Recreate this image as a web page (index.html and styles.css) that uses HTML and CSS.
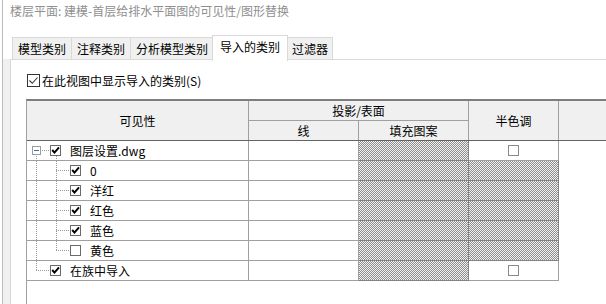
FILE: index.html
```html
<!DOCTYPE html>
<html lang="zh-CN">
<head>
    <meta charset="UTF-8">
    <title>可见性/图形替换</title>
    <link rel="stylesheet" href="styles.css">
</head>
<body>
    <div class="window">
        <div class="title">楼层平面: 建模-首层给排水平面图的可见性/图形替换</div>

        <div class="tabs">
            <div class="tab">模型类别</div>
            <div class="tab">注释类别</div>
            <div class="tab">分析模型类别</div>
            <div class="tab active">导入的类别</div>
            <div class="tab last">过滤器</div>
        </div>

        <div class="panel">
            <div class="show-row">
                <span class="big-box">
                    <svg width="11" height="11" viewBox="0 0 11 11"><path d="M1.5 5.5 L4.3 8.3 L9.5 2.5" fill="none" stroke="#333" stroke-width="1.1"/></svg>
                </span>
                <span>在此视图中显示导入的类别(S)</span>
            </div>

            <div class="table">
                <div class="head">
                    <div class="h vis">可见性</div>
                    <div class="h proj">投影/表面</div>
                    <div class="h half">半色调</div>
                    <div class="h rest"></div>
                    <div class="h sub">线</div>
                    <div class="h sub">填充图案</div>
                </div>

                <div class="rows">
                    <!-- 图层设置.dwg -->
                    <div class="c name parent">
                        <span class="ind exp"><span class="minus"></span></span>
                        <span class="chk"><svg width="9" height="9" viewBox="0 0 9 9"><path d="M1.2 4 L3.5 6.6 L8 1.4" fill="none" stroke="#000" stroke-width="2"/></svg></span>
                        <span>图层设置.dwg</span>
                    </div>
                    <div class="c"></div>
                    <div class="c hatch"></div>
                    <div class="c mid"><span class="chk off"></span></div>

                    <div class="c name">
                        <span class="ind pipe"></span><span class="ind tee"></span>
                        <span class="chk"><svg width="9" height="9" viewBox="0 0 9 9"><path d="M1.2 4 L3.5 6.6 L8 1.4" fill="none" stroke="#000" stroke-width="2"/></svg></span>
                        <span>0</span>
                    </div>
                    <div class="c"></div>
                    <div class="c hatch"></div>
                    <div class="c hatch"></div>

                    <div class="c name">
                        <span class="ind pipe"></span><span class="ind tee"></span>
                        <span class="chk"><svg width="9" height="9" viewBox="0 0 9 9"><path d="M1.2 4 L3.5 6.6 L8 1.4" fill="none" stroke="#000" stroke-width="2"/></svg></span>
                        <span>洋红</span>
                    </div>
                    <div class="c"></div>
                    <div class="c hatch"></div>
                    <div class="c hatch"></div>

                    <div class="c name">
                        <span class="ind pipe"></span><span class="ind tee"></span>
                        <span class="chk"><svg width="9" height="9" viewBox="0 0 9 9"><path d="M1.2 4 L3.5 6.6 L8 1.4" fill="none" stroke="#000" stroke-width="2"/></svg></span>
                        <span>红色</span>
                    </div>
                    <div class="c"></div>
                    <div class="c hatch"></div>
                    <div class="c hatch"></div>

                    <div class="c name">
                        <span class="ind pipe"></span><span class="ind tee"></span>
                        <span class="chk"><svg width="9" height="9" viewBox="0 0 9 9"><path d="M1.2 4 L3.5 6.6 L8 1.4" fill="none" stroke="#000" stroke-width="2"/></svg></span>
                        <span>蓝色</span>
                    </div>
                    <div class="c"></div>
                    <div class="c hatch"></div>
                    <div class="c hatch"></div>

                    <div class="c name">
                        <span class="ind pipe"></span><span class="ind elbow"></span>
                        <span class="chk"></span>
                        <span>黄色</span>
                    </div>
                    <div class="c"></div>
                    <div class="c hatch"></div>
                    <div class="c hatch"></div>

                    <!-- 在族中导入 -->
                    <div class="c name">
                        <span class="ind elbow"></span>
                        <span class="chk"><svg width="9" height="9" viewBox="0 0 9 9"><path d="M1.2 4 L3.5 6.6 L8 1.4" fill="none" stroke="#000" stroke-width="2"/></svg></span>
                        <span>在族中导入</span>
                    </div>
                    <div class="c"></div>
                    <div class="c hatch"></div>
                    <div class="c mid"><span class="chk off"></span></div>
                </div>
            </div>
        </div>
    </div>
</body>
</html>
```

FILE: styles.css
```css
html, body {
    margin: 0;
    height: 100%;
    overflow: hidden;
}

body {
    font-family: "Noto Sans CJK SC", "Noto Sans", sans-serif;
    font-size: 12px;
    color: #000;
    background-color: #fff;
}

.window {
    height: 100vh;
    margin-left: 2px;
    border-left: 1px solid #bcbcbc;
    display: flex;
    flex-direction: column;
    background: linear-gradient(#f0f0f0, #f0f0f0) 0 59px / 7px 100% no-repeat #fff;
}

.title {
    height: 35px;
    line-height: 22px;
    padding-left: 7px;
    color: #8f8f8f;
    white-space: nowrap;
    box-sizing: border-box;
}

/* tabs */
.tabs {
    display: flex;
    align-items: flex-end;
    height: 24px;
    margin-left: 7px;
    padding-left: 2px;
}

.tab {
    height: 22px;
    line-height: 21px;
    padding: 0 5px;
    box-sizing: border-box;
    border: 1px solid #d9d9d9;
    border-bottom: none;
    margin-right: -1px;
    background-color: #f0f0f0;
    white-space: nowrap;
}

.tab.active {
    height: 26px;
    margin-bottom: -2px;
    margin-left: -1px;
    padding: 0 7px 4px;
    background-color: #fff;
    position: relative;
    z-index: 1;
}

.tab.last {
    padding: 0 4px;
}

/* panel */
.panel {
    flex: 1;
    margin-left: 7px;
    border-top: 1px solid #d9d9d9;
    border-left: 1px solid #d9d9d9;
    background-color: #fff;
    display: flex;
    flex-direction: column;
    min-height: 0;
}

.show-row {
    display: flex;
    align-items: center;
    height: 13px;
    margin: 14px 0 0 16px;
    line-height: 13px;
    white-space: nowrap;
}

.big-box {
    width: 13px;
    height: 13px;
    box-sizing: border-box;
    border: 1px solid #333;
    margin-right: 2px;
    display: flex;
    align-items: center;
    justify-content: center;
}

/* table */
.table {
    flex: 1;
    margin: 12px 0 0 15px;
    border-top: 2px solid #7d7d7d;
    border-left: 1px solid #a0a0a0;
}

.head {
    display: grid;
    grid-template-columns: 222px 110px 110px 90px 1fr;
    grid-template-rows: 20px 19px;
    background-color: #f0f0f0;
    border-bottom: 1px solid #646464;
}

.h {
    display: flex;
    align-items: center;
    justify-content: center;
    box-sizing: border-box;
    border-right: 1px solid #a0a0a0;
    white-space: nowrap;
}

.vis {
    grid-row: 1 / 3;
}

.proj {
    grid-column: 2 / 4;
    border-bottom: 1px solid #a0a0a0;
}

.half {
    grid-column: 4;
    grid-row: 1 / 3;
}

.rest {
    grid-column: 5;
    grid-row: 1 / 3;
    border-right: none;
}

.rows {
    display: grid;
    grid-template-columns: 222px 110px 110px 90px;
    grid-auto-rows: 20px;
    width: 532px;
}

.c {
    box-sizing: border-box;
    border-right: 1px solid #a0a0a0;
    border-bottom: 1px solid #a0a0a0;
}

.c.mid {
    display: flex;
    align-items: center;
    justify-content: center;
}

.c.hatch {
    background: repeating-conic-gradient(#8e8e8e 0 25%, #f2f2f2 0 50%) 0 0 / 2px 2px;
    border-right-style: dotted;
    border-bottom-style: dotted;
    border-color: #7a7a7a;
}

/* tree column */
.c.name {
    display: flex;
    align-items: stretch;
    white-space: nowrap;
}

.c.name > span:last-child {
    align-self: center;
    line-height: 14px;
}

.c.parent {
    background: repeating-linear-gradient(#9a9a9a 0 1px, transparent 1px 2px) 29px 15px / 1px 5px no-repeat;
}

.ind {
    width: 20px;
    flex: none;
}

.pipe {
    background: repeating-linear-gradient(#9a9a9a 0 1px, transparent 1px 2px) 9px 0 / 1px 100% no-repeat;
}

.tee, .elbow, .exp {
    width: 23px;
}

.tee {
    background:
        repeating-linear-gradient(#9a9a9a 0 1px, transparent 1px 2px) 9px 0 / 1px 100% no-repeat,
        repeating-linear-gradient(to right, #9a9a9a 0 1px, transparent 1px 2px) 9px 9px / 13px 1px no-repeat;
}

.elbow {
    background:
        repeating-linear-gradient(#9a9a9a 0 1px, transparent 1px 2px) 9px 0 / 1px 10px no-repeat,
        repeating-linear-gradient(to right, #9a9a9a 0 1px, transparent 1px 2px) 9px 9px / 13px 1px no-repeat;
}

.exp {
    display: flex;
    align-items: center;
    background:
        repeating-linear-gradient(#9a9a9a 0 1px, transparent 1px 2px) 9px 15px / 1px 5px no-repeat,
        repeating-linear-gradient(to right, #9a9a9a 0 1px, transparent 1px 2px) 15px 9px / 8px 1px no-repeat;
}

.minus {
    width: 9px;
    height: 9px;
    margin-left: 5px;
    box-sizing: border-box;
    border: 1px solid #9c9c9c;
    background: linear-gradient(#3f6f9f, #3f6f9f) center / 5px 1px no-repeat #fff;
}

.chk {
    width: 11px;
    height: 11px;
    flex: none;
    align-self: center;
    box-sizing: border-box;
    border: 1px solid #6a6a6a;
    background-color: #fff;
    margin-right: 9px;
    display: flex;
    align-items: center;
    justify-content: center;
}

.chk.off {
    border-color: #8a8a8a;
    margin-right: 0;
}
```
